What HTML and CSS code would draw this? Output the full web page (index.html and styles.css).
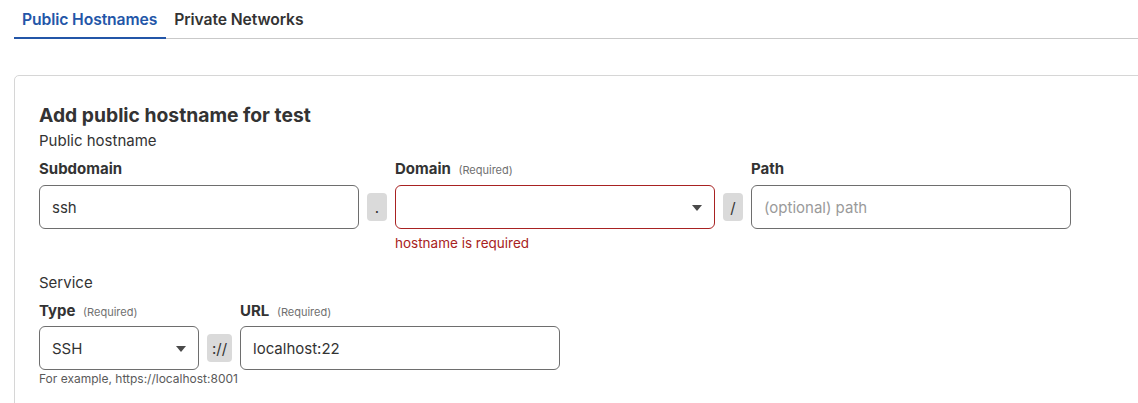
FILE: index.html
```html
<!DOCTYPE html>
<html>
<head>
<meta charset="utf-8">
<link rel="stylesheet" href="styles.css">
</head>
<body>
<div class="page">
  <nav class="tabs">
    <div class="tab active">Public Hostnames</div>
    <div class="tab">Private Networks</div>
  </nav>
  <section class="card">
    <h2 class="title">Add public hostname for test</h2>
    <div class="section-label">Public hostname</div>
    <div class="grid grid-host">
      <label class="label">Subdomain</label>
      <span></span>
      <label class="label">Domain <span class="req">(Required)</span></label>
      <span></span>
      <label class="label">Path</label>

      <div class="input">ssh</div>
      <div class="sep">.</div>
      <div class="input select error-border"><span></span><span class="caret"></span></div>
      <div class="sep">/</div>
      <div class="input placeholder">(optional) path</div>

      <span></span>
      <span></span>
      <div class="error">hostname is required</div>
    </div>

    <div class="section-label service">Service</div>
    <div class="grid grid-service">
      <label class="label">Type <span class="req">(Required)</span></label>
      <span></span>
      <label class="label">URL <span class="req">(Required)</span></label>

      <div class="input select"><span>SSH</span><span class="caret"></span></div>
      <div class="sep sep-wide">://</div>
      <div class="input">localhost:22</div>

      <div class="help">For example, https://localhost:8001</div>
    </div>
  </section>
</div>
</body>
</html>
```

FILE: styles.css
```css
html, body {
  margin: 0;
  padding: 0;
  overflow: hidden;
  background: #ffffff;
}
body {
  font-family: Inter, "Noto Sans", "Liberation Sans", sans-serif;
  color: #333333;
}
.page {
  padding-left: 14px;
}
.tabs {
  display: flex;
  border-bottom: 1px solid #c9c9c9;
  height: 38px;
}
.tab {
  padding: 2px 8px 0;
  font-size: 15.7px;
  font-weight: 600;
  line-height: 36px;
  height: 38px;
  box-sizing: border-box;
  color: #333333;
  letter-spacing: -0.1px;
}
.tab.active {
  color: #2356a8;
  border-bottom: 2px solid #2356a8;
  height: 39px;
  padding-right: 9px;
}
.card {
  margin-top: 36px;
  margin-right: -40px;
  border: 1px solid #d6d6d6;
  border-radius: 5px;
  padding: 27px 24px 20px;
}
.title {
  margin: 0;
  font-size: 19.3px;
  line-height: 24px;
  font-weight: 700;
  color: #333333;
}
.section-label {
  margin-top: 4px;
  font-size: 15px;
  line-height: 20px;
  color: #333333;
}
.section-label.service {
  margin-top: 16px;
}
.grid {
  display: grid;
  column-gap: 8px;
  margin-top: 8px;
}
.grid-host {
  grid-template-columns: 320px 20px 320px 20px 320px;
  grid-template-rows: 20px 44px 22px;
  row-gap: 6px;
}
.grid-service {
  grid-template-columns: 160px 25px 320px;
  grid-template-rows: 20px 44px 14px;
  row-gap: 5px;
  margin-top: 8px;
}
.grid-service .help {
  margin-top: -3px;
}
.label {
  font-size: 15px;
  line-height: 20px;
  font-weight: 700;
  color: #333333;
  white-space: nowrap;
}
.req {
  font-size: 11px;
  font-weight: 400;
  color: #707070;
  margin-left: 4px;
}
.input {
  box-sizing: border-box;
  height: 44px;
  border: 1px solid #6e6e6e;
  border-radius: 6px;
  padding: 0 12px;
  display: flex;
  align-items: center;
  font-size: 15px;
  color: #333333;
}
.placeholder {
  color: #9a9a9a;
}
.select {
  justify-content: space-between;
  padding-right: 12px;
}
.error-border {
  border-color: #a82222;
}
.caret {
  width: 0;
  height: 0;
  border-left: 5px solid transparent;
  border-right: 5px solid transparent;
  border-top: 6px solid #4a4a4a;
  margin-top: 1px;
}
.sep {
  align-self: center;
  height: 28px;
  border-radius: 4px;
  background: #dadada;
  display: flex;
  align-items: center;
  justify-content: center;
  font-size: 15px;
  color: #333333;
}
.error {
  grid-column: 3;
  font-size: 13.5px;
  line-height: 16px;
  color: #a82222;
}
.help {
  grid-column: 1 / -1;
  font-size: 12px;
  line-height: 14px;
  color: #5a5a5a;
}
```
